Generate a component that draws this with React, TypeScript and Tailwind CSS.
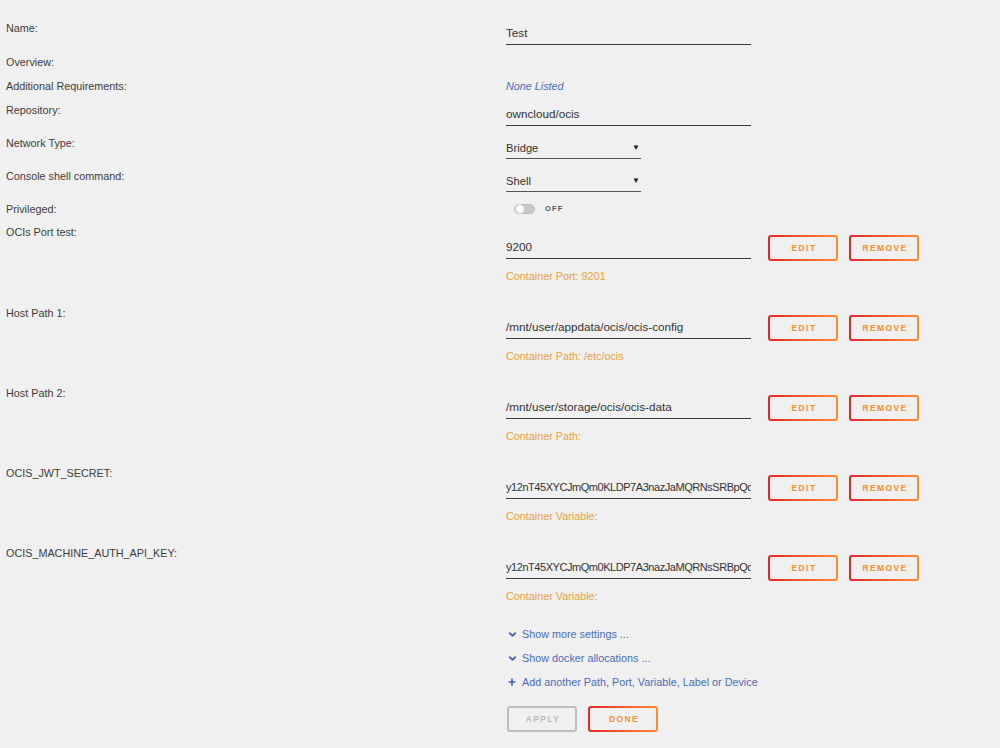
import React from "react";
import { ChevronDown, Plus } from "lucide-react";

const font = "font-['Liberation_Sans',Arial,sans-serif]";

function GradBtn({ label }: { label: string }) {
  return (
    <div className="w-[70px] h-[26px] rounded-[3px] border-2 border-transparent [background:linear-gradient(#f0f0f0,#f0f0f0)_padding-box,linear-gradient(90deg,#e22828,#ff8c2f)_border-box] flex items-center justify-center text-[8.5px] font-bold tracking-[1.4px] text-[#ff8c2f] pl-[2px]">
      {label}
    </div>
  );
}

function Label({ text }: { text: string }) {
  return <div className="w-[506px] pl-[6px] text-[10.8px] leading-[16px] text-[#3c3c3c] shrink-0">{text}</div>;
}

function TextInput({ value, pt = "pt-[5px]", narrow }: { value: string; pt?: string; narrow?: boolean }) {
  return (
    <div
      className={`w-[245px] ${pt} pb-[3px] border-b border-[#3a3a3a] ${
        narrow ? "text-[11px] tracking-[-0.45px]" : "text-[11.7px]"
      } leading-[16px] text-[#333] whitespace-nowrap overflow-hidden`}
    >
      {value}
    </div>
  );
}

function Select({ value }: { value: string }) {
  return (
    <div className="w-[135px] pt-[5px] pb-[2px] border-b border-[#555] text-[11.2px] leading-[16px] text-[#333] flex items-center justify-between pr-[1px]">
      <span>{value}</span>
      <span className="text-[8px] leading-none text-[#222]">▼</span>
    </div>
  );
}

function ConfigRow({
  label,
  value,
  sub,
  first,
  narrow,
}: {
  label: string;
  value: string;
  sub: string;
  first?: boolean;
  narrow?: boolean;
}) {
  return (
    <div className={`flex items-start ${first ? "h-[81px]" : "h-[80px]"}`}>
      <Label text={label} />
      <div className={`${first ? "pt-[11px]" : "pt-[10px]"} flex flex-col`}>
        <div className="flex items-start">
          <TextInput value={value} pt="pt-[4px]" narrow={narrow} />
          <div className="ml-[17px] flex gap-[11px]">
            <GradBtn label="EDIT" />
            <GradBtn label="REMOVE" />
          </div>
        </div>
        <div className="mt-[7px] text-[10.8px] leading-[16px] text-[#e9a23b]">{sub}</div>
      </div>
    </div>
  );
}

function LinkRow({ icon, text }: { icon: "chev" | "plus"; text: string }) {
  return (
    <div className="h-[24px] flex items-center pl-[507px] text-[10.8px] text-[#4a6dbb]">
      <span className="w-[15px] flex items-center">
        {icon === "chev" ? (
          <ChevronDown size={11} strokeWidth={4} color="#3f63b4" />
        ) : (
          <Plus size={10} strokeWidth={4} color="#3f63b4" />
        )}
      </span>
      <span>{text}</span>
    </div>
  );
}

export default function App() {
  const secret = "y12nT45XYCJmQm0KLDP7A3nazJaMQRNsSRBpQd0Kx7wP";
  return (
    <div className={`${font} bg-[#f0f0f0] w-[1000px] h-[748px] overflow-hidden pt-[20px]`}>
      <div className="flex items-start h-[34px]">
        <Label text="Name:" />
        <TextInput value="Test" />
      </div>
      <div className="flex items-start h-[24px]">
        <Label text="Overview:" />
      </div>
      <div className="flex items-start h-[24px]">
        <Label text="Additional Requirements:" />
        <div className="text-[10.8px] leading-[16px] italic text-[#4a6dbb]">None Listed</div>
      </div>
      <div className="flex items-start h-[33px]">
        <Label text="Repository:" />
        <TextInput value="owncloud/ocis" pt="pt-[4px]" />
      </div>
      <div className="flex items-start h-[33px]">
        <Label text="Network Type:" />
        <Select value="Bridge" />
      </div>
      <div className="flex items-start h-[33px]">
        <Label text="Console shell command:" />
        <Select value="Shell" />
      </div>
      <div className="flex items-start h-[23px]">
        <Label text="Privileged:" />
        <div className="flex items-center pl-[8px] h-[15px]">
          <div className="w-[21px] h-[10px] rounded-full bg-[#c8c8c8] border border-[#bdbdbd] flex items-center">
            <div className="w-[10px] h-[10px] rounded-full bg-white border border-[#cfcfcf]" />
          </div>
          <span className="ml-[10px] text-[7.5px] font-bold tracking-[1.2px] text-[#555]">OFF</span>
        </div>
      </div>
      <ConfigRow first label="OCIs Port test:" value="9200" sub="Container Port: 9201" />
      <ConfigRow label="Host Path 1:" value="/mnt/user/appdata/ocis/ocis-config" sub="Container Path: /etc/ocis" />
      <ConfigRow label="Host Path 2:" value="/mnt/user/storage/ocis/ocis-data" sub="Container Path:" />
      <ConfigRow narrow label="OCIS_JWT_SECRET:" value={secret} sub="Container Variable:" />
      <ConfigRow narrow label="OCIS_MACHINE_AUTH_API_KEY:" value={secret} sub="Container Variable:" />
      <div className="-mt-[3px]">
        <LinkRow icon="chev" text="Show more settings ..." />
        <LinkRow icon="chev" text="Show docker allocations ..." />
        <LinkRow icon="plus" text="Add another Path, Port, Variable, Label or Device" />
      </div>
      <div className="flex gap-[11px] pl-[507px] mt-[12px]">
        <div className="w-[70px] h-[26px] rounded-[3px] border-2 border-[#bdbdbd] flex items-center justify-center text-[8.5px] font-bold tracking-[1.4px] text-[#bbbbbb] pl-[2px]">
          APPLY
        </div>
        <GradBtn label="DONE" />
      </div>
    </div>
  );
}
